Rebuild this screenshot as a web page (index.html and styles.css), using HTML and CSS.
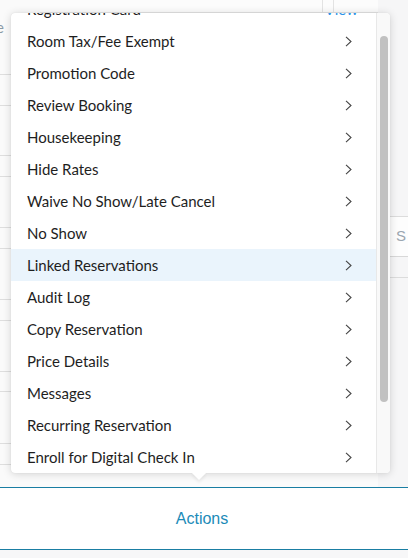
FILE: index.html
```html
<!DOCTYPE html>
<html>
<head>
<meta charset="utf-8">
<link rel="stylesheet" href="styles.css">
</head>
<body>
<div class="screen">
  <div class="content">
    <div class="left-col">
      <div class="bg-head"><span class="bg-e">e</span></div>
      <div class="bg-row h31"></div>
      <div class="bg-row h50"></div>
      <div class="bg-row h21"></div>
      <div class="bg-row h51"></div>
      <div class="bg-row h21"></div>
      <div class="bg-row h51"></div>
      <div class="bg-row h21"></div>
      <div class="bg-row h51"></div>
      <div class="bg-row h20"></div>
      <div class="bg-row h52"></div>
      <div class="bg-row h21"></div>
    </div>
    <div class="mid-col">
      <div class="top-strip">
        <div class="ts-a"></div>
        <div class="ts-b"></div>
        <div class="ts-c"></div>
      </div>
    </div>
    <div class="right-col">
      <div class="rc-top"></div>
      <div class="rc-field"><span class="rc-s">S</span></div>
      <div class="rc-row"></div>
    </div>

    <div class="popup">
      <div class="menu">
        <div class="menu-inner">
          <div class="item"><span>Registration Card</span><span class="view">View</span></div>
          <div class="item"><span>Room Tax/Fee Exempt</span><svg class="chev" viewBox="0 0 7 11"><path d="M1 0.8 L6 5.5 L1 10.2"/></svg></div>
          <div class="item"><span>Promotion Code</span><svg class="chev" viewBox="0 0 7 11"><path d="M1 0.8 L6 5.5 L1 10.2"/></svg></div>
          <div class="item"><span>Review Booking</span><svg class="chev" viewBox="0 0 7 11"><path d="M1 0.8 L6 5.5 L1 10.2"/></svg></div>
          <div class="item"><span>Housekeeping</span><svg class="chev" viewBox="0 0 7 11"><path d="M1 0.8 L6 5.5 L1 10.2"/></svg></div>
          <div class="item"><span>Hide Rates</span><svg class="chev" viewBox="0 0 7 11"><path d="M1 0.8 L6 5.5 L1 10.2"/></svg></div>
          <div class="item"><span>Waive No Show/Late Cancel</span><svg class="chev" viewBox="0 0 7 11"><path d="M1 0.8 L6 5.5 L1 10.2"/></svg></div>
          <div class="item"><span>No Show</span><svg class="chev" viewBox="0 0 7 11"><path d="M1 0.8 L6 5.5 L1 10.2"/></svg></div>
          <div class="item active"><span>Linked Reservations</span><svg class="chev" viewBox="0 0 7 11"><path d="M1 0.8 L6 5.5 L1 10.2"/></svg></div>
          <div class="item"><span>Audit Log</span><svg class="chev" viewBox="0 0 7 11"><path d="M1 0.8 L6 5.5 L1 10.2"/></svg></div>
          <div class="item"><span>Copy Reservation</span><svg class="chev" viewBox="0 0 7 11"><path d="M1 0.8 L6 5.5 L1 10.2"/></svg></div>
          <div class="item"><span>Price Details</span><svg class="chev" viewBox="0 0 7 11"><path d="M1 0.8 L6 5.5 L1 10.2"/></svg></div>
          <div class="item"><span>Messages</span><svg class="chev" viewBox="0 0 7 11"><path d="M1 0.8 L6 5.5 L1 10.2"/></svg></div>
          <div class="item"><span>Recurring Reservation</span><svg class="chev" viewBox="0 0 7 11"><path d="M1 0.8 L6 5.5 L1 10.2"/></svg></div>
          <div class="item"><span>Enroll for Digital Check In</span><svg class="chev" viewBox="0 0 7 11"><path d="M1 0.8 L6 5.5 L1 10.2"/></svg></div>
        </div>
      </div>
      <div class="track"><div class="thumb"></div></div>
      <div class="caret"></div>
    </div>
  </div>
  <div class="actions"><span>Actions</span></div>
  <div class="footer"></div>
</div>
</body>
</html>
```

FILE: styles.css
```css
html, body {
  margin: 0;
  padding: 0;
}
body {
  width: 408px;
  height: 558px;
  overflow: hidden;
  background: #f7f7f8;
  font-family: Lato, "Open Sans", sans-serif;
}
.screen {
  display: flex;
  flex-direction: column;
  height: 558px;
}
.content {
  position: relative;
  height: 487px;
  flex-shrink: 0;
  display: flex;
  background: #fbfbfb;
}
.left-col {
  width: 40px;
  display: flex;
  flex-direction: column;
  background: #fafafa;
}
.bg-head {
  height: 74px;
  border-bottom: 1px solid #dedede;
  position: relative;
}
.bg-e {
  position: absolute;
  left: -4px;
  top: 18px;
  font-size: 15px;
  color: #8a9aa6;
}
.bg-row { border-bottom: 1px solid #dedede; }
.h20 { height: 19px; }
.h21 { height: 20px; }
.h31 { height: 30px; }
.h50 { height: 49px; }
.h51 { height: 50px; }
.h52 { height: 51px; }
.mid-col {
  flex: 1;
  display: flex;
  flex-direction: column;
}
.top-strip {
  height: 12px;
  display: flex;
  border-bottom: 1px solid #e6e6e6;
  background: #fcfcfc;
}
.ts-a { flex: 1; border-right: 1px solid #e3e3e3; }
.ts-b { width: 10px; border-right: 1px solid #e3e3e3; }
.ts-c { width: 44px; }
.right-col {
  width: 30px;
  display: flex;
  flex-direction: column;
  background: #f6f6f7;
}
.rc-top { height: 216px; border-bottom: 1px solid #dcdcdc; }
.rc-field {
  height: 39px;
  background: #fdfdfd;
  border-bottom: 1px solid #d8d8d8;
  position: relative;
}
.rc-s {
  position: absolute;
  left: 18px;
  top: 10px;
  font-size: 15px;
  color: #9aa6b0;
  font-family: "Liberation Sans", sans-serif;
}
.rc-row { height: 20px; border-bottom: 1px solid #dcdcdc; }

.popup {
  position: absolute;
  left: 11px;
  top: 13px;
  width: 379px;
  height: 460px;
  background: #fff;
  border-radius: 4px;
  box-shadow: 0 1px 8px rgba(0, 0, 0, 0.16), 0 0 1px rgba(0, 0, 0, 0.12);
  display: flex;
}
.menu {
  flex: 1;
  overflow: hidden;
  border-radius: 4px 0 0 4px;
}
.menu-inner {
  margin-top: -20px;
}
.item {
  height: 32px;
  display: flex;
  align-items: center;
  justify-content: space-between;
  padding: 0 24px 0 16px;
  font-size: 15px;
  color: #1e1e1e;
}
.item.active { background: #eaf4fc; }
.view {
  color: #2a93e8;
  margin-right: -6px;
}
.chev {
  width: 7px;
  height: 11px;
  fill: none;
  stroke: #444;
  stroke-width: 1.1;
}
.track {
  width: 13px;
  border-left: 1px solid #e8e8e8;
  background: #f9f9f9;
  border-radius: 0 4px 4px 0;
  display: flex;
  flex-direction: column;
  align-items: center;
}
.thumb {
  margin-top: 23px;
  width: 8px;
  height: 366px;
  border-radius: 4px;
  background: #c1c1c1;
}
.caret {
  position: absolute;
  left: 183px;
  bottom: -5px;
  width: 10px;
  height: 10px;
  background: #fff;
  transform: rotate(45deg);
  box-shadow: 2px 2px 3px rgba(0, 0, 0, 0.06);
}
.actions {
  height: 61px;
  flex-shrink: 0;
  border-top: 1px solid #1a7ea3;
  border-bottom: 1px solid #1a7ea3;
  background: #fff;
  display: flex;
  align-items: center;
  justify-content: center;
  padding-right: 4px;
  font-family: "Liberation Sans", Arial, sans-serif;
  font-size: 16px;
  color: #1b8bb8;
}
.footer {
  flex: 1;
  background: #f7f7f8;
}
```
